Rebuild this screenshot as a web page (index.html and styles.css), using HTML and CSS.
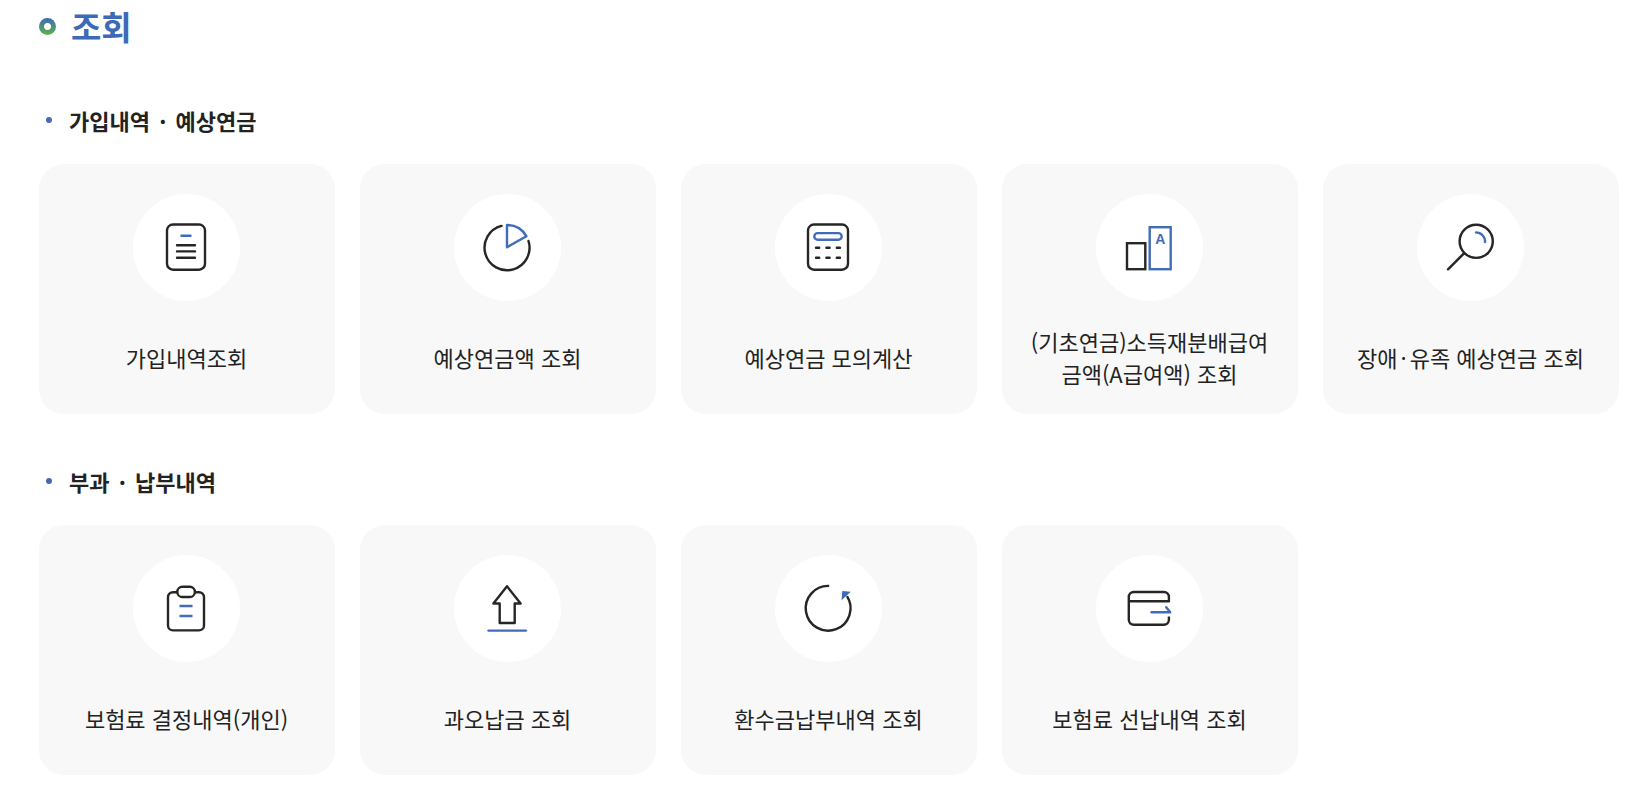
FILE: index.html
```html
<!DOCTYPE html>
<html lang="ko">
<head>
<meta charset="utf-8">
<meta name="viewport" content="width=device-width, initial-scale=1">
<title>조회</title>
<link rel="stylesheet" href="styles.css">
</head>
<body>
<main class="page">
  <h1 class="title"><span class="ring"></span>조회</h1>

  <section class="group">
    <h2 class="subtitle"><span>가입내역 <span class="dot">·</span> 예상연금</span></h2>
    <ul class="cards">
      <li><a class="card" href="#">
        <svg class="icon" viewBox="0 0 107 107" aria-hidden="true">
          <rect x="34" y="30.5" width="38" height="45.2" rx="6"/>
          <path d="M44 51.3h18M44 57.4h18M44 63.7h18"/>
          <path class="blue" d="M48.5 41.7h9"/>
        </svg>
        <span class="label">가입내역조회</span></a></li>
      <li><a class="card" href="#">
        <svg class="icon" viewBox="0 0 107 107" aria-hidden="true">
          <path d="M47.5 31.9A22.5 22.5 0 1 0 74.5 47"/>
          <path class="blue" d="M53 31V53.3L72.4 42.2A22.5 22.5 0 0 0 53 31Z"/>
        </svg>
        <span class="label">예상연금액 조회</span></a></li>
      <li><a class="card" href="#">
        <svg class="icon" viewBox="0 0 107 107" aria-hidden="true">
          <rect x="33" y="30.5" width="40" height="45.2" rx="6"/>
          <path d="M41 53.7h3.2M51.4 53.7h3.2M61.8 53.7h3.2M41 63.7h3.2M51.4 63.7h3.2M61.8 63.7h3.2"/>
          <rect class="blue" x="39.3" y="39.1" width="27.4" height="6.6" rx="3.3"/>
        </svg>
        <span class="label">예상연금 모의계산</span></a></li>
      <li><a class="card" href="#">
        <svg class="icon square" viewBox="0 0 107 107" aria-hidden="true">
          <rect x="31" y="49.2" width="18.3" height="26"/>
          <rect class="blue" x="53.7" y="33.2" width="21" height="42"/>
          <text class="letter" x="64.2" y="49.5">A</text>
        </svg>
        <span class="label">(기초연금)소득재분배급여<br>금액(A급여액) 조회</span></a></li>
      <li><a class="card" href="#">
        <svg class="icon" viewBox="0 0 107 107" aria-hidden="true">
          <circle cx="59.2" cy="47.3" r="16.6"/>
          <path d="M47 59.3L31 75.3"/>
          <path class="blue" d="M59 38.4A9.2 9.2 0 0 1 68.1 48"/>
        </svg>
        <span class="label"><span>장애<span class="dot">·</span>유족 예상연금 조회</span></span></a></li>
    </ul>
  </section>

  <section class="group">
    <h2 class="subtitle"><span>부과 <span class="dot">·</span> 납부내역</span></h2>
    <ul class="cards">
      <li><a class="card" href="#">
        <svg class="icon" viewBox="0 0 107 107" aria-hidden="true">
          <rect x="35" y="37.2" width="36" height="38.2" rx="5"/>
          <rect class="clip" x="44.3" y="31.8" width="17.6" height="10.2" rx="5.1"/>
          <path class="blue butt" d="M46.5 51h13M46.5 61h13"/>
        </svg>
        <span class="label">보험료 결정내역(개인)</span></a></li>
      <li><a class="card" href="#">
        <svg class="icon" viewBox="0 0 107 107" aria-hidden="true">
          <path d="M53 31.3L66.6 48.5H60.7V68H45.7V48.5H39.4Z"/>
          <path class="blue" d="M34.5 75.6h37.4"/>
        </svg>
        <span class="label">과오납금 조회</span></a></li>
      <li><a class="card" href="#">
        <svg class="icon" viewBox="0 0 107 107" aria-hidden="true">
          <path class="butt" d="M54.2 30.9A22.4 22.4 0 1 0 72 41.2"/>
          <path class="solid" d="M67.3 36L75.8 36.8L66.6 45.2Z"/>
        </svg>
        <span class="label">환수금납부내역 조회</span></a></li>
      <li><a class="card" href="#">
        <svg class="icon" viewBox="0 0 107 107" aria-hidden="true">
          <path class="butt" d="M32.8 46.3H72.9V42a5 5 0 0 0-5-5H37.8a5 5 0 0 0-5 5V64.8a5 5 0 0 0 5 5H67.9a5 5 0 0 0 5-5V61.6"/>
          <path class="blue" d="M55.5 57.2H74.2L70.2 52.2"/>
        </svg>
        <span class="label">보험료 선납내역 조회</span></a></li>
    </ul>
  </section>
</main>
</body>
</html>
```
FILE: styles.css
```css
* {
  box-sizing: border-box;
}

body {
  margin: 0;
  background: #fff;
  color: #222;
  font-family: "Noto Sans CJK KR", "Noto Sans", sans-serif;
}

.page {
  padding: 2px 24px 18px 39px;
}

.title {
  display: flex;
  align-items: center;
  gap: 15px;
  margin: 0;
  color: #3d6ab7;
  font-size: 33px;
  font-weight: 700;
  line-height: 48px;
}

.ring {
  width: 17px;
  height: 17px;
  border-radius: 50%;
  background:
    radial-gradient(circle, #fff 3px, transparent 4px),
    linear-gradient(#3d6ab7, #5fb346);
}

.group {
  padding-top: 48px;
}

.title + .group {
  padding-top: 51px;
}

.subtitle {
  display: flex;
  align-items: center;
  gap: 17px;
  margin: 0 0 25px;
  padding-left: 7px;
  font-size: 22px;
  font-weight: 700;
  line-height: 38px;
}

.subtitle::before {
  content: "";
  width: 6px;
  height: 6px;
  border-radius: 50%;
  background: #4a66b5;
}

.dot {
  padding: 0 3px;
}

.cards {
  display: grid;
  grid-template-columns: repeat(5, 1fr);
  gap: 25px;
  margin: 0;
  padding: 0;
  list-style: none;
}

.card {
  display: flex;
  flex-direction: column;
  align-items: center;
  min-height: 250px;
  padding: 30px 1px 2px 0;
  border-radius: 25px;
  background: #f8f8f8;
  color: inherit;
  text-decoration: none;
}

.icon {
  width: 107px;
  height: 107px;
  border-radius: 50%;
  background: #fff;
  fill: none;
  stroke: #262626;
  stroke-width: 2.4;
  stroke-linecap: round;
  stroke-linejoin: round;
}

.square {
  stroke-linejoin: miter;
}

.blue {
  stroke: #426cb9;
}

.butt {
  stroke-linecap: butt;
}

.clip {
  fill: #fff;
}

.solid {
  fill: #3d6ab7;
  stroke: none;
}

.letter {
  fill: #426cb9;
  stroke: none;
  font-family: "Liberation Sans", sans-serif;
  font-size: 14px;
  font-weight: 700;
  text-anchor: middle;
}

.label {
  display: flex;
  flex: 1;
  align-items: center;
  font-size: 22px;
  line-height: 32px;
  text-align: center;
}
```
